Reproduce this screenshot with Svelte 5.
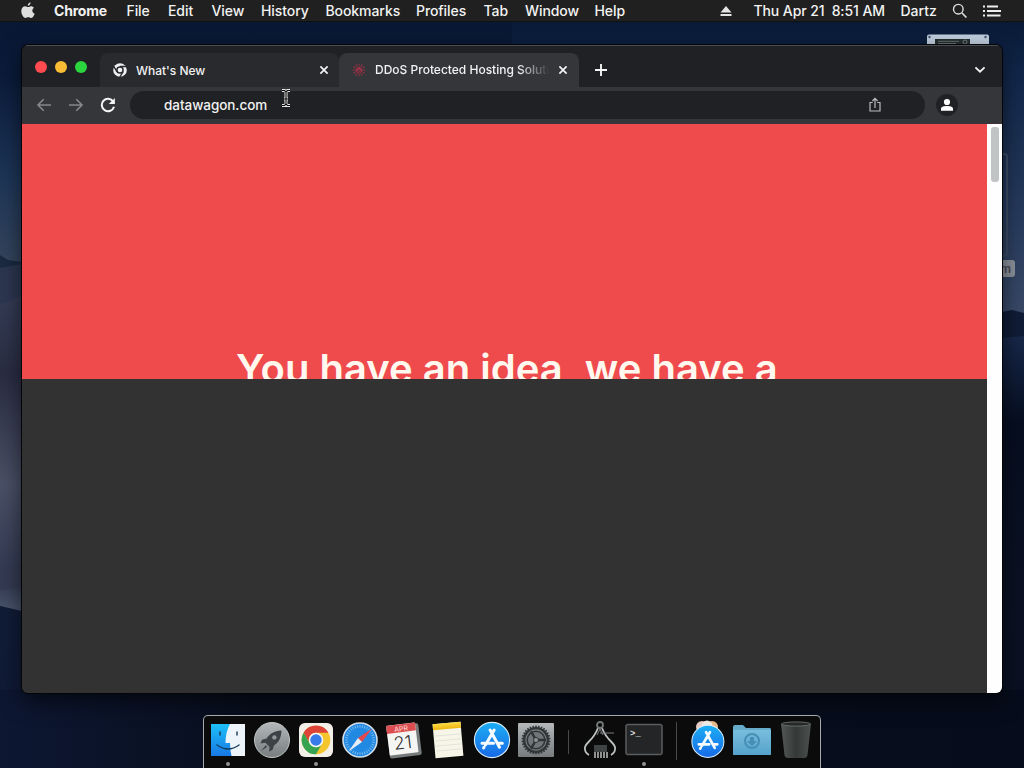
<script>
  const menus = [
    ['Chrome', 54], ['File', 23], ['Edit', 25], ['View', 31], ['History', 46],
    ['Bookmarks', 72], ['Profiles', 49], ['Tab', 23], ['Window', 51], ['Help', 30]
  ];
  const ticks = Array.from({ length: 36 }, (_, i) => i * 10);
  const rays = Array.from({ length: 12 }, (_, i) => i * 30);
  const teeth = Array.from({ length: 30 }, (_, i) => i * 12);
</script>

{#snippet close()}
  <svg class="close" width="10" height="10" viewBox="0 0 10 10"><path d="M1.4 1.4 8.6 8.6M8.6 1.4 1.4 8.6" stroke="#f4f5f6" stroke-width="1.7" /></svg>
{/snippet}

{#snippet appstore()}
  <circle cx="18" cy="18" r="17.6" fill="url(#storeGrad)" stroke="#d9edf8" stroke-width="1.1" />
  <g stroke="#f5fbff" stroke-width="3" stroke-linecap="round">
    <path d="M16.1 8 25.5 25.2M20.2 8 11.4 23M8 21.2H19.5M23.5 21.2H28.3M10 25.3 9.6 26" />
  </g>
{/snippet}

<div class="desktop">
  <svg class="wallpaper" width="1024" height="768" viewBox="0 0 1024 768" preserveAspectRatio="none">
    <defs>
      <linearGradient id="sky" x2="0" y2="1">
        <stop offset="0" stop-color="#08162f" /><stop offset=".1" stop-color="#0b1b3b" />
        <stop offset=".23" stop-color="#1d3557" /><stop offset=".34" stop-color="#34445c" />
      </linearGradient>
      <linearGradient id="skyR" x2="0" y2="1">
        <stop offset="0" stop-color="#06142d" /><stop offset=".22" stop-color="#102649" />
        <stop offset=".65" stop-color="#25395c" /><stop offset="1" stop-color="#3a4b68" />
      </linearGradient>
      <linearGradient id="dune" x2="0" y2="1">
        <stop offset="0" stop-color="#343c55" /><stop offset=".25" stop-color="#292d43" />
        <stop offset=".6" stop-color="#4a5066" /><stop offset=".9" stop-color="#303750" /><stop offset="1" stop-color="#4b566d" />
      </linearGradient>
      <linearGradient id="floor" x2="0" y2="1">
        <stop offset="0" stop-color="#101c37" /><stop offset=".6" stop-color="#101a35" /><stop offset="1" stop-color="#0c1733" />
      </linearGradient>
      <linearGradient id="rightFloor" x2="0" y2="1">
        <stop offset="0" stop-color="#18284a" /><stop offset=".2" stop-color="#060e20" />
        <stop offset=".65" stop-color="#0b1122" /><stop offset="1" stop-color="#080f22" />
      </linearGradient>
      <linearGradient id="bottom"><stop offset="0" stop-color="#0d1732" /><stop offset=".25" stop-color="#080e1d" /><stop offset="1" stop-color="#060c1b" /></linearGradient>
    </defs>
    <rect width="512" height="768" fill="url(#sky)" />
    <rect x="512" width="512" height="320" fill="url(#skyR)" />
    <path d="M0 255 8 260 22 262V620H0Z" fill="#1b2942" />
    <path d="M0 268 22 264V610H0Z" fill="#2c3650" />
    <path d="M0 304Q12 301 22 295V612L0 606Z" fill="url(#dune)" />
    <path d="M0 405Q14 401 22 399V422L0 425Z" transform="translate(0 165)" fill="#343a52" />
    <path d="M0 606 22 611V768H0Z" fill="url(#floor)" />
    <path d="M1002 312 1012 310 1024 313V768H1002Z" fill="#101c36" />
    <path d="M1002 338 1024 336V768H1002Z" fill="url(#rightFloor)" />
    <rect y="690" width="1024" height="78" fill="url(#bottom)" />
  </svg>
  <svg class="drive" width="64" height="14" viewBox="0 0 64 14">
    <rect x="1" y=".5" width="62" height="20" rx="2" fill="#bfcddd" />
    <circle cx="3.5" cy="3" r="1.2" fill="#40506e" /><circle cx="59.5" cy="3" r="1.2" fill="#40506e" />
    <rect x="9" y="5" width="35" height="9" fill="#252e30" /><path d="M12 7.3H33M12 9.5H30" stroke="#66716c" /><circle cx="39" cy="8" r="2" fill="none" stroke="#77817e" />
  </svg>
  <div class="iconframe"></div>
  <div class="iconlabel">m</div>

  <header>
    <svg class="apple" width="14" height="17" viewBox="0 0 14 17"><path fill="#dedede" d="M9.6.3C9.7 2 8.4 3.7 6.8 3.8 6.6 2.2 8.1.6 9.6.3ZM10 4.3c1.2 0 2.3.6 3 1.5-2.5 1.5-2.1 4.9.7 5.9-.8 2-2.1 4.3-3.8 4.3-1.1 0-1.4-.7-2.7-.7s-1.7.7-2.7.7C2.3 16 .3 12.2.3 9.1.3 6 2.2 4.3 4.2 4.3c1.3 0 2.1.8 3 .8.8 0 1.8-.8 2.8-.8Z" /></svg>
    <nav>
      {#each menus as [label, width], i}
        <span class:bold={i === 0} style:width={width + 'px'}>{label}</span>
      {/each}
    </nav>
    <svg class="eject" width="12" height="12" viewBox="0 0 12 12"><path d="M6 1 11.5 7.4H.5ZM.5 9H11.5V11H.5Z" fill="#e4e4e4" /></svg>
    <span class="clock">Thu Apr 21&nbsp; 8:51 AM</span>
    <span class="user">Dartz</span>
    <svg class="search" width="16" height="16" viewBox="0 0 16 16" fill="none" stroke="#dedede"><circle cx="6.3" cy="6.2" r="4.8" stroke-width="1.4" /><path d="m10 10 4.4 4.5" stroke-width="1.7" /></svg>
    <svg width="18" height="12" viewBox="0 0 18 12" stroke="#eee" stroke-width="1.9"><path d="M0 1.5H2M4 1.5H15M0 6H2M4 6H18M0 10.5H2M4 10.5H17.5" /></svg>
  </header>

  <main>
    <div class="tabs">
      <div class="lights"><i></i><i></i><i></i></div>
      <div class="tab first">
        <svg width="14" height="14" viewBox="0 0 14 14"><circle cx="7" cy="7" r="6.8" fill="#eef0f1" /><circle cx="7" cy="7" r="3.1" fill="#eef0f1" stroke="#292a2e" stroke-width="1.5" /><path d="M7 3.5H13.5M4 8.8.9 3.5M10 8.8 6.8 14" stroke="#292a2e" stroke-width="1.4" /></svg>
        <span>What's New</span>{@render close()}
      </div>
      <div class="tab active">
        <svg width="16" height="16" viewBox="0 0 16 16"><g stroke="#943345" stroke-width="1.25" stroke-dasharray="1.8 .7">
          {#each rays as a}<path d="M8 6V1" transform="rotate({a} 8 8)" />{/each}</g><circle cx="8" cy="8" r="3" fill="#722e3e" /><path d="m5 9 3-3 3 3" fill="none" stroke="#b53b4d" /></svg>
        <span class="fade">DDoS Protected Hosting Solutions</span>{@render close()}
      </div>
      <svg class="plus" width="14" height="14" viewBox="0 0 14 14"><path d="M7 1V13M1 7H13" stroke="#f5f5f5" stroke-width="1.9" /></svg>
      <svg class="chevron" width="12" height="8" viewBox="0 0 12 8"><path d="m1.4 1.4 4.6 4.4 4.6-4.4" fill="none" stroke="#f1f1f1" stroke-width="1.9" /></svg>
    </div>
    <div class="toolbar">
      <svg width="16" height="14" viewBox="0 0 16 14"><path d="M15 7H2M7.7 1.3 2 7l5.7 5.7" fill="none" stroke="#85878b" stroke-width="1.6" /></svg>
      <svg width="16" height="14" viewBox="0 0 16 14"><path d="M1 7H14M8.3 1.3 14 7l-5.7 5.7" fill="none" stroke="#85878b" stroke-width="1.6" /></svg>
      <svg width="16" height="16" viewBox="0 0 16 16"><path d="M13.2 4.6A6.2 6.2 0 1 0 14 9.7" fill="none" stroke="#f3f4f4" stroke-width="2" /><path d="M14.9.9V7H8.8Z" fill="#f3f4f4" /></svg>
      <div class="address">
        <span>datawagon.com</span>
        <svg width="12" height="16" viewBox="0 0 12 16" fill="none" stroke="#b9bbbd" stroke-width="1.2"><path d="M3.7 5.5H1V14H11V5.5H8.3M6 11V1.3M3.4 4 6 1.4 8.6 4" /></svg>
      </div>
      <div class="profile"><svg width="14" height="14" viewBox="0 0 14 14" fill="#fff"><circle cx="7" cy="4" r="3.1" /><path d="M1 12.7V11C1 8.8 3.6 8 7 8s6 .8 6 3v1.7Z" /></svg></div>
    </div>
    <div class="page">
      <div class="content"><section><h1>You have an idea, we have a</h1></section></div>
      <div class="scroll"><div></div></div>
    </div>
  </main>

  <svg class="cursor" width="12" height="20" viewBox="0 0 12 20" fill="none"><path d="M2 2.5H4.5L6 4 7.5 2.5H10M6 4V16M2 17.5H4.5L6 16 7.5 17.5H10M4 11H8" stroke="#e8e8e8" stroke-width="3" /><path d="M2 2.5H4.5L6 4 7.5 2.5H10M6 4V16M2 17.5H4.5L6 16 7.5 17.5H10M4 11H8" stroke="#080808" stroke-width="1.1" /></svg>

  <footer>
    <svg width="617" height="52" viewBox="204 716 617 52">
      <defs>
        <linearGradient id="finder" x2="0" y2="1"><stop stop-color="#1dc0f8" /><stop offset="1" stop-color="#1878e5" /></linearGradient>
        <linearGradient id="silver" x2="0" y2="1"><stop stop-color="#b4b8b9" /><stop offset="1" stop-color="#777c7f" /></linearGradient>
        <linearGradient id="storeGrad" x2="0" y2="1"><stop stop-color="#1caef4" /><stop offset="1" stop-color="#1769e6" /></linearGradient>
        <linearGradient id="folder" x2="0" y2="1"><stop stop-color="#79bddd" /><stop offset="1" stop-color="#55a3cb" /></linearGradient>
        <linearGradient id="trash"><stop stop-color="#535856" /><stop offset=".5" stop-color="#343837" /><stop offset="1" stop-color="#4c504f" /></linearGradient>
        <linearGradient id="yellow" x2="0" y2="1"><stop stop-color="#ffda42" /><stop offset="1" stop-color="#eeb510" /></linearGradient>
      </defs>
      <g transform="translate(211 724)">
        <path d="M0 0H34V32H0Z" fill="url(#finder)" /><path d="M19 0H34V32H20.5Q19 26 19 19H14.5Q14.5 8 19 0Z" fill="#edf4fa" />
        <path d="M9 8V11M26 8V11" stroke="#18344f" stroke-width="1.4" stroke-linecap="round" /><path d="M6 21Q17 29 28 21" fill="none" stroke="#153c5f" stroke-width="1.4" stroke-linecap="round" />
      </g>
      <g transform="translate(254 722)">
        <circle cx="18" cy="18" r="17.5" fill="url(#silver)" stroke="#c2c6c7" stroke-width="1" />
        <path d="M27.5 8.5C20 9 15.5 12 12.7 16.4L8 17.8 6.5 21.5 11.4 20.8 15.6 25 15 29.6 18.5 28 20 23.5C24.5 20.5 27.3 16 27.5 8.5Z" fill="#3c4245" /><circle cx="20.4" cy="15.4" r="2.2" fill="#93999b" /><path d="m12 23-5 6 6-4" fill="#3c4245" />
      </g>
      <g transform="translate(299 723)">
        <rect width="34" height="34" rx="6" fill="#f2f0e9" /><circle cx="17" cy="17" r="14.3" fill="#f5c52d" />
        <path d="M4.6 9.8A14.3 14.3 0 0 1 29.4 9.8H17A7.2 7.2 0 0 0 10.8 20.6Z" fill="#de4337" /><path d="M4.6 9.8A14.3 14.3 0 0 0 17 31.3L23.2 20.6A7.2 7.2 0 0 1 10.8 20.6Z" fill="#36a350" />
        <circle cx="17" cy="17" r="6.5" fill="#377bea" stroke="#f4f7f8" stroke-width="1.6" />
      </g>
      <g transform="translate(342 722)">
        <circle cx="18" cy="18" r="17" fill="#2289e3" stroke="#d2dfe8" stroke-width="1.6" />
        {#each ticks as a}<path d="M18 3V5.7" stroke="#94caed" stroke-width=".7" transform="rotate({a} 18 18)" />{/each}
        <path d="M30 6.5 20 20 16 16Z" fill="#e4474e" /><path d="M6.5 29.5 16 16 20 20Z" fill="#e5eff5" />
      </g>
      <g transform="rotate(-7 403 740)">
        <rect x="388" y="725" width="32" height="32" rx="2" fill="#777b7c" /><rect x="388" y="724" width="29" height="30" rx="1" fill="#f5f6f4" /><path d="M388 724H417V732H388Z" fill="#dc4d51" />
        <text x="402.5" y="731" text-anchor="middle" font-size="7" fill="#ffdfd8">APR</text><text x="402.5" y="749" text-anchor="middle" font-size="18" font-weight="300" fill="#333">21</text>
      </g>
      <g transform="rotate(-5 448 740)"><rect x="434" y="723" width="28" height="34" fill="#f6f5e8" /><path d="M434 723H462V729H434Z" fill="url(#yellow)" />{#each [735, 740, 745, 750] as y}<path d="M435 {y}H461" stroke="#dedfd6" stroke-width=".8" />{/each}</g>
      <g transform="translate(474 722)">{@render appstore()}</g>
      <g transform="translate(518 723)"><rect width="36" height="34" rx="1" fill="url(#silver)" />
        {#each teeth as a}<path d="M17.3 2.5H18.7L19 6H17Z" fill="#303536" transform="rotate({a} 18 17)" />{/each}
        <circle cx="18" cy="17" r="11.8" fill="#777e80" stroke="#303536" stroke-width="2.3" /><circle cx="18" cy="17" r="8.8" fill="#70777a" stroke="#303536" stroke-width="1.6" />
        <path d="M18 17H28M18 17 13 8.3M18 17 13 25.7" stroke="#303536" stroke-width="2.5" /><circle cx="18" cy="17" r="2.5" fill="#8d9496" stroke="#303536" />
      </g>
      <path d="M568.5 730V754M676.5 722V760" stroke="#484a4c" />
      <g transform="translate(583 721)" fill="none">
        <path d="M15 7C10 20 3 21 2 26Q1 31 6 34M19 7C24 20 31 21 32 26Q33 31 28 34" stroke="#bfc2c2" stroke-width="1.8" /><circle cx="17" cy="4" r="3" stroke="#747879" stroke-width="1.8" /><path d="M17 8 14 14M17 8 20 14M17 12H31" stroke="#777b7c" />
        <rect x="11" y="24" width="13" height="7" fill="#404344" /><path d="M12 31V37M15 31V37M18 31V37M21 31V37M24 31V37" stroke="#c9cbcb" stroke-width="1.4" />
      </g>
      <rect x="626" y="724.5" width="36" height="30" rx="2" fill="#242526" stroke="#5a5c5d" stroke-width="1.5" /><text class="mono" x="630" y="736" font-size="9" font-weight="700" fill="#dedede">&gt;_</text>
      <circle cx="702" cy="727" r="6" fill="#e8cbc2" /><circle cx="712" cy="727" r="6" fill="#e9b88a" /><circle cx="707" cy="726" r="5.5" fill="#eee8e2" />
      <g transform="translate(691.5 725) scale(.91)">{@render appstore()}</g>
      <path d="M733 727Q733 725 735 725H743L746 728H770Q771 728 771 730V755H733Z" fill="#66abc9" /><path d="M733 730H771V755H733Z" fill="url(#folder)" /><circle cx="752" cy="741" r="7" fill="none" stroke="#458fb6" stroke-width="2" /><path d="M750 737H754V741H757L752 746 747 741H750Z" fill="#458fb6" />
      <path d="M781 724 784.5 755Q785 758 788 758H804Q807 758 807.5 755L811 724Q796 720 781 724Z" fill="url(#trash)" /><ellipse cx="796" cy="724" rx="14.5" ry="2.1" fill="#252928" stroke="#717775" stroke-width=".8" />
      <g fill="#929494"><circle cx="228" cy="764" r="2" /><circle cx="316" cy="764" r="2" /><circle cx="644" cy="764" r="2" /></g>
    </svg>
  </footer>
</div>

<style>
  :global(body) { margin: 0; overflow: hidden; background: #0b1734; }
  .desktop { position: relative; width: 1024px; height: 768px; overflow: hidden; display: flex; flex-direction: column; align-items: center; font-family: Inter, "Liberation Sans", sans-serif; color: #f2f2f2; }
  svg { display: block; flex: none; }
  .wallpaper { position: absolute; left: 0; top: 0; }
  .drive { position: absolute; left: 926px; top: 34px; }
  .iconframe { position: absolute; left: 970px; top: 153px; width: 34px; height: 100px; border: 2px solid #3b4b65; border-radius: 4px; }
  .iconlabel { position: absolute; left: 990px; top: 260px; width: 21px; height: 17px; padding-right: 4px; border-radius: 3px; background: #8c919b; color: #454b57; text-align: right; font-size: 12px; font-weight: 600; line-height: 17px; }
  header { position: relative; width: 1024px; height: 22px; flex: none; box-sizing: border-box; display: flex; align-items: center; background: #202020; font-size: 14px; font-weight: 500; white-space: nowrap; border-bottom: 1px solid #101113; }
  .apple { margin-left: 21px; margin-right: 19px; }
  nav { display: flex; gap: 18.5px; letter-spacing: -.08px; }
  nav span { flex: none; }
  .bold { font-weight: 700; letter-spacing: -.2px; }
  .eject { margin-left: 95px; }
  .clock { margin-left: 22px; width: 131px; letter-spacing: -.1px; }
  .user { margin-left: 16px; width: 37px; }
  .search { margin-left: 14px; margin-right: 15px; }
  main { position: relative; width: 980px; height: 648px; flex: none; margin-top: 23px; border-radius: 6px; overflow: hidden; box-shadow: 0 0 0 1px #030507, 0 8px 22px #0009; background: #202124; }
  .tabs { height: 42px; display: flex; align-items: flex-end; box-sizing: border-box; border-top: 1px solid #494c50; background: #202124; }
  .lights { width: 78px; height: 41px; display: flex; gap: 8px; padding-left: 13px; box-sizing: border-box; align-items: center; }
  .lights i { width: 12px; height: 12px; border-radius: 50%; background: #ff4b50; }
  .lights i:nth-child(2) { background: #f8bd35; }
  .lights i:nth-child(3) { background: #2bd53d; }
  .tab { width: 240px; height: 34px; box-sizing: border-box; display: flex; align-items: center; border-radius: 8px 8px 0 0; font-size: 12px; font-weight: 500; white-space: nowrap; }
  .tab.first { width: 239px; background: #292a2e; padding-left: 13px; }
  .tab span { margin-left: 9px; }
  .first span { width: 182px; letter-spacing: -.02px; }
  .tab.active { background: #35363a; padding-left: 12px; }
  .tab .fade { width: 174px; margin-left: 8px; overflow: hidden; mask-image: linear-gradient(90deg, #000 82%, transparent 100%); line-height: 18px; }
  .first .close { margin-left: 1px; }
  .active .close { margin-left: 9px; }
  .plus { margin: 0 0 10px 15px; }
  .chevron { margin: 0 16px 13px auto; }
  .toolbar { height: 37px; box-sizing: border-box; border-bottom: 1px solid #403239; display: flex; align-items: center; gap: 16px; padding-left: 14px; background: #35363a; }
  .address { width: 795px; height: 28px; margin-left: -2px; border-radius: 14px; background: #202124; display: flex; align-items: center; }
  .address span { width: 103px; margin-left: 34px; font-size: 13.5px; font-weight: 500; letter-spacing: -.05px; }
  .address svg { margin-left: auto; margin-right: 44px; }
  .profile { width: 22px; height: 22px; border-radius: 50%; background: #202124; display: flex; align-items: center; justify-content: center; margin-left: -5px; }
  .page { height: 569px; display: flex; }
  .content { width: 965px; background: #323232; }
  section { height: 255px; overflow: hidden; background: #ef4a4c; }
  h1 { margin: 219px 0 0 214px; font-size: 40px; line-height: 52px; font-weight: 600; white-space: nowrap; color: #fff8ef; }
  .scroll { width: 15px; background: #fefefe; }
  .scroll div { margin: 3px 0 0 4px; width: 8px; height: 55px; border-radius: 3px; background: #c0c4c4; }
  .cursor { position: absolute; left: 280px; top: 88px; }
  footer { position: relative; width: 616px; height: 52px; flex: none; margin-top: 22px; border: 1px solid #a6aab0; border-bottom: 0; border-radius: 5px 5px 0 0; background: #0b0b0c; overflow: hidden; }
  .mono { font-family: "Liberation Mono", monospace; }
</style>
